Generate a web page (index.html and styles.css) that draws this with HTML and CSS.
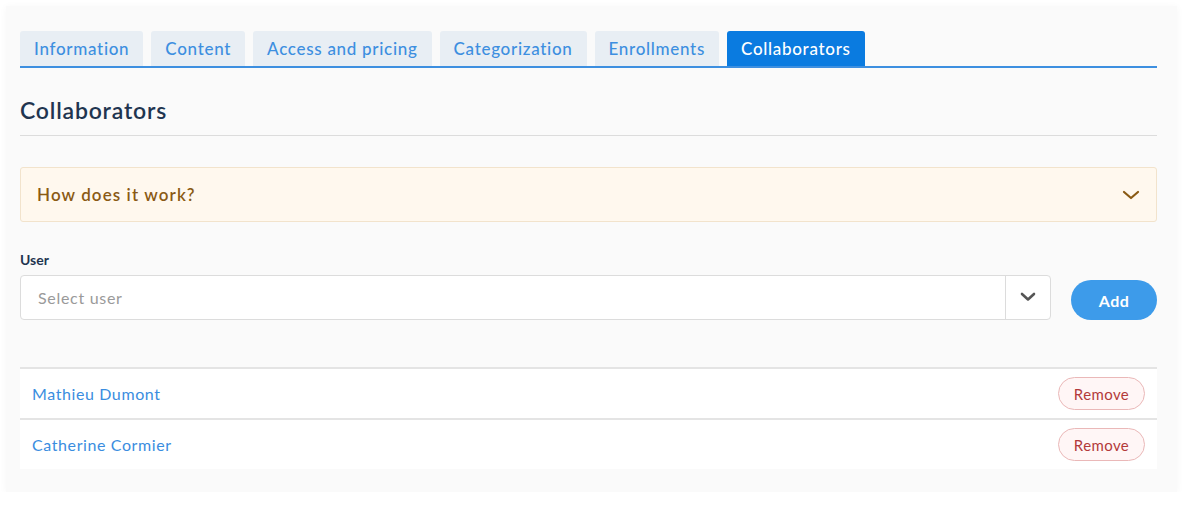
FILE: index.html
```html
<!DOCTYPE html>
<html lang="en">
<head>
<meta charset="utf-8">
<link rel="stylesheet" href="styles.css">
</head>
<body>
<div class="card">
  <nav class="tabs">
    <span class="tab">Information</span>
    <span class="tab">Content</span>
    <span class="tab">Access and pricing</span>
    <span class="tab">Categorization</span>
    <span class="tab">Enrollments</span>
    <span class="tab active">Collaborators</span>
  </nav>
  <h2 class="title">Collaborators</h2>
  <div class="accordion">
    <span>How does it work?</span>
    <svg class="chev" width="18" height="12" viewBox="0 0 18 12"><path d="M2 3l7 6 7-6" fill="none" stroke="#8a5a14" stroke-width="2.2" stroke-linecap="round" stroke-linejoin="round"/></svg>
  </div>
  <label class="label">User</label>
  <div class="form-row">
    <div class="select">
      <span class="placeholder">Select user</span>
      <span class="select-btn">
        <svg width="16" height="10" viewBox="0 0 16 10"><path d="M2 2l6 5.5L14 2" fill="none" stroke="#555" stroke-width="2.6" stroke-linecap="round" stroke-linejoin="round"/></svg>
      </span>
    </div>
    <button class="add">Add</button>
  </div>
  <ul class="list">
    <li class="row"><span class="name">Mathieu Dumont</span><button class="remove">Remove</button></li>
    <li class="row"><span class="name">Catherine Cormier</span><button class="remove">Remove</button></li>
  </ul>
</div>
</body>
</html>
```
FILE: styles.css
```css
* { box-sizing: border-box; }
html, body { margin: 0; padding: 0; background: #fff; }
body {
  font-family: Lato, "Open Sans", Arial, sans-serif;
  padding: 6px 23px 0 6px;
}
.card {
  background: #fafafa;
  box-shadow: 0 1px 8px rgba(0,0,0,0.04);
  padding: 25px 20px 20px 14px;
  height: 486px;
}
.tabs {
  display: flex;
  gap: 8px;
  border-bottom: 2px solid #3d8fe0;
}
.tab {
  background: #e8eef4;
  color: #3d8fe0;
  font-size: 17px;
  font-weight: 500;
  letter-spacing: 0.7px;
  padding: 0 14px;
  height: 35px;
  line-height: 35px;
  border-radius: 3px 3px 0 0;
}
.tab.active { background: #0a7be0; color: #fff; }
.title {
  margin: 28px 0 0;
  font-size: 23px;
  font-weight: 600;
  color: #1f3550;
  letter-spacing: 0.8px;
  padding-bottom: 11px;
  border-bottom: 1px solid #dcdcdc;
  line-height: 28px;
}
.accordion {
  margin-top: 31px;
  height: 55px;
  background: #fff8ee;
  border: 1px solid #f2e3cc;
  border-radius: 3px;
  display: flex;
  align-items: center;
  justify-content: space-between;
  padding: 0 16px 0 16px;
  color: #8a5a14;
  font-size: 17px;
  font-weight: 600;
  letter-spacing: 1.1px;
}
.label {
  display: block;
  margin-top: 30px;
  font-size: 14px;
  font-weight: 700;
  color: #1f3550;
  line-height: 16px;
}
.form-row {
  display: flex;
  align-items: center;
  gap: 20px;
  margin-top: 6px;
}
.select {
  flex: 1;
  height: 45px;
  background: #fff;
  border: 1px solid #dcdcdc;
  border-radius: 4px;
  display: flex;
  align-items: center;
  justify-content: space-between;
}
.placeholder { color: #9a9a9a; font-size: 16px; padding-left: 17px; letter-spacing: 0.7px; }
.select-btn {
  width: 45px;
  height: 100%;
  border-left: 1px solid #dcdcdc;
  display: flex;
  align-items: center;
  justify-content: center;
}
.add {
  width: 86px;
  height: 40px;
  margin-top: 6px;
  border: none;
  border-radius: 20px;
  background: #3d9bea;
  color: #fff;
  font-family: inherit;
  font-size: 16px;
  font-weight: 700;
  letter-spacing: 0.5px;
}
.list {
  list-style: none;
  margin: 47px 0 0;
  padding: 0;
  background: #fff;
  border-top: 2px solid #e4e4e4;
}
.row {
  height: 49px;
  display: flex;
  align-items: center;
  justify-content: space-between;
  padding: 0 12px;
}
.row + .row { border-top: 2px solid #e4e4e4; height: 51px; }
.name { color: #3a8de0; font-size: 16px; letter-spacing: 0.6px; }
.remove {
  height: 33px;
  width: 87px;
  border: 1px solid #eab8b8;
  background: #fff6f6;
  border-radius: 17px;
  color: #b33a3a;
  font-family: inherit;
  font-size: 15px;
  letter-spacing: 0.4px;
}
```
